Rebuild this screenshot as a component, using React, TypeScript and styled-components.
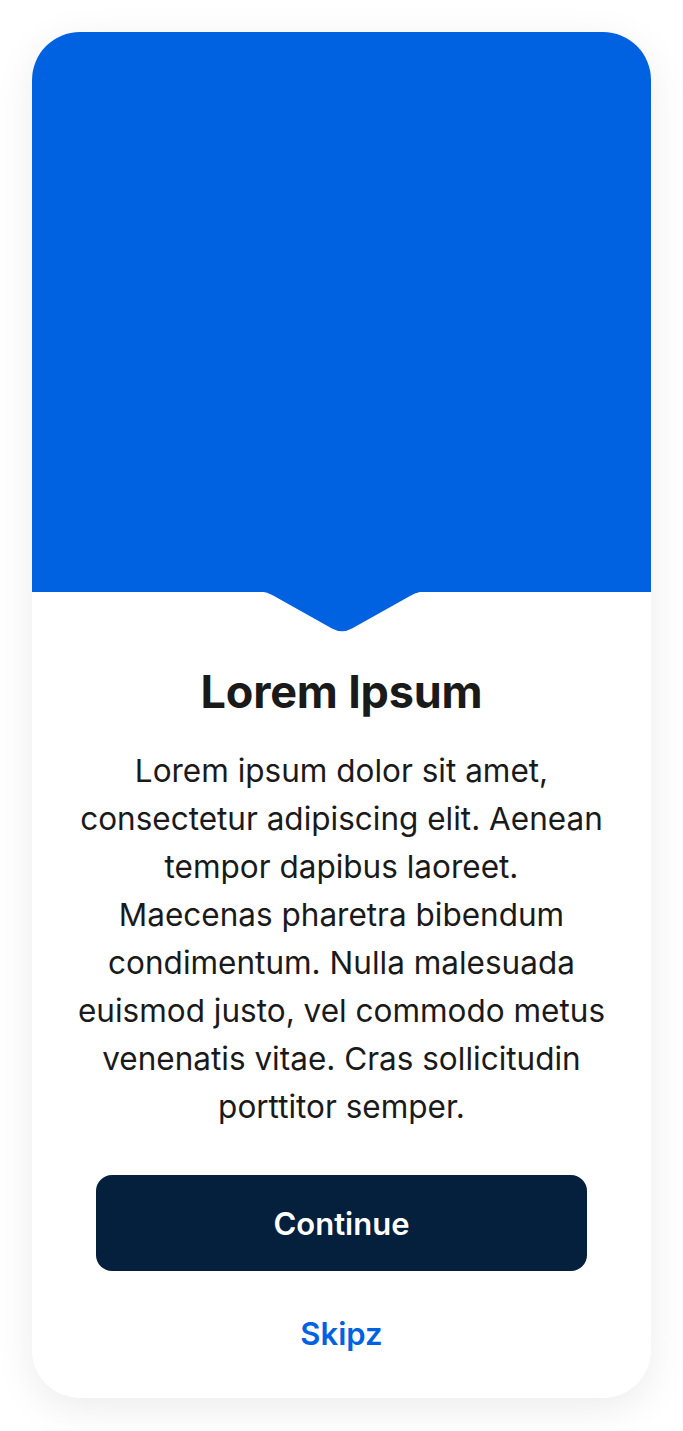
import React from "react";
import styled, { createGlobalStyle } from "styled-components";

const Global = createGlobalStyle`
  html, body { margin: 0; padding: 0; background: #ffffff; }
  body { font-family: Inter, "Noto Sans", "Liberation Sans", sans-serif; -webkit-font-smoothing: antialiased; }
`;

const Page = styled.div`
  padding: 32px 32px 33px 32px;
  box-sizing: border-box;
  width: 683px;
`;

const Card = styled.div`
  width: 619px;
  height: 1366px;
  border-radius: 48px;
  background: #ffffff;
  box-shadow: 0 10px 40px rgba(0, 0, 0, 0.08);
  overflow: hidden;
  display: flex;
  flex-direction: column;
`;

const Hero = styled.div`
  position: relative;
  height: 560px;
  background: #0062e0;
  flex-shrink: 0;
`;

const Notch = styled.svg`
  position: absolute;
  left: 50%;
  bottom: -40px;
  transform: translateX(-50%);
  display: block;
`;

const Body = styled.div`
  display: flex;
  flex-direction: column;
  align-items: center;
  padding: 73px 36px 0 36px;
  flex: 1;
`;

const Title = styled.h1`
  margin: 0;
  font-size: 45px;
  line-height: 54px;
  font-weight: 700;
  color: #1a1a1a;
  text-align: center;
  letter-spacing: -0.2px;
`;

const Text = styled.p`
  margin: 28px 0 0 0;
  font-size: 31.5px;
  line-height: 48px;
  font-weight: 400;
  color: #1a1a1a;
  text-align: center;
`;

const PrimaryButton = styled.button`
  margin-top: 44px;
  width: 491px;
  height: 96px;
  border: none;
  border-radius: 16px;
  background: #05203d;
  color: #ffffff;
  font-family: inherit;
  font-size: 31px;
  font-weight: 600;
  cursor: pointer;
`;

const LinkButton = styled.button`
  margin-top: 40px;
  border: none;
  background: none;
  color: #0062e0;
  font-family: inherit;
  font-size: 31px;
  font-weight: 600;
  line-height: 46px;
  padding: 0;
  cursor: pointer;
`;

export default function App() {
  return (
    <>
      <Global />
      <Page>
        <Card>
          <Hero>
            <Notch width="180" height="41" viewBox="0 0 180 41">
              <path
                d="M0 0 C10 0 15 1 22 5 L80 37.5 Q90 43 100 37.5 L158 5 C165 1 170 0 180 0 Z"
                fill="#0062e0"
              />
            </Notch>
          </Hero>
          <Body>
            <Title>Lorem Ipsum</Title>
            <Text>
              Lorem ipsum dolor sit amet, consectetur adipiscing elit. Aenean
              tempor dapibus laoreet.
              <br />
              Maecenas pharetra bibendum condimentum. Nulla malesuada euismod
              justo, vel commodo metus venenatis vitae. Cras sollicitudin
              porttitor semper.
            </Text>
            <PrimaryButton>Continue</PrimaryButton>
            <LinkButton>Skipz</LinkButton>
          </Body>
        </Card>
      </Page>
    </>
  );
}
